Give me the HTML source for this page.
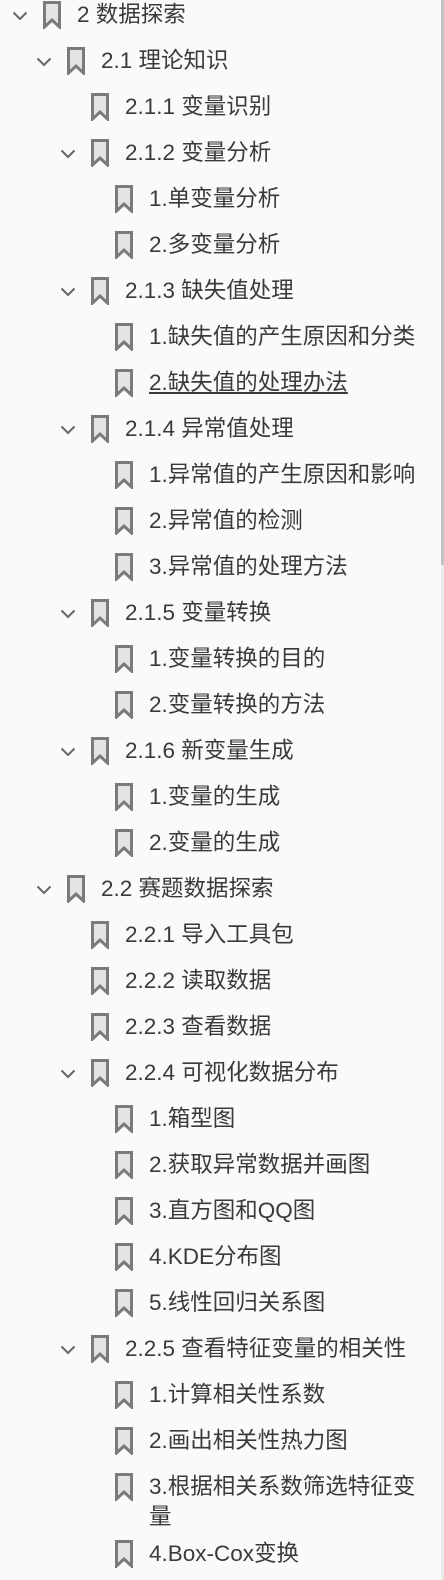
<!DOCTYPE html>
<html><head><meta charset="utf-8"><style>
body{margin:0;width:444px;height:1580px;background:#fafafa;overflow:hidden;position:relative;font-family:"Liberation Sans","Noto Sans CJK SC",sans-serif;}
.r{position:absolute;left:0;height:28px;width:440px}
.c{position:absolute;top:10px;width:16px;height:10px}
.b{position:absolute;top:0;width:18px;height:28px}
.t{position:absolute;top:-1px;font-size:22.5px;line-height:30px;color:#3a3a3a;white-space:nowrap}
.sb{position:absolute;right:0;top:0;width:3px;height:565px;background:#c2c2c2}
.st{position:absolute;right:0;top:565px;width:3px;height:1015px;background:#ececec}
</style></head><body>
<svg width="0" height="0" style="position:absolute"><defs>
<symbol id="bk" viewBox="0 0 18 28"><path d="M1.5 1.5H16.5V26L9 19L1.5 26Z" fill="#e4e4e4" stroke="#7a7a7a" stroke-width="3" stroke-linejoin="miter"/></symbol>
<symbol id="ch" viewBox="0 0 16 10"><path d="M1.5 1.5L8 8L14.5 1.5" fill="none" stroke="#666" stroke-width="2"/></symbol>
</defs></svg>
<div class="sb"></div><div class="st"></div>

<div class="r" style="top:1px"><svg class="c" style="left:12px"><use href="#ch"/></svg><svg class="b" style="left:43px"><use href="#bk"/></svg><span class="t" style="left:77px">2 数据探索</span></div>
<div class="r" style="top:47px"><svg class="c" style="left:36px"><use href="#ch"/></svg><svg class="b" style="left:67px"><use href="#bk"/></svg><span class="t" style="left:101px">2.1 理论知识</span></div>
<div class="r" style="top:93px"><svg class="b" style="left:91px"><use href="#bk"/></svg><span class="t" style="left:125px">2.1.1 变量识别</span></div>
<div class="r" style="top:139px"><svg class="c" style="left:60px"><use href="#ch"/></svg><svg class="b" style="left:91px"><use href="#bk"/></svg><span class="t" style="left:125px">2.1.2 变量分析</span></div>
<div class="r" style="top:185px"><svg class="b" style="left:115px"><use href="#bk"/></svg><span class="t" style="left:149px">1.单变量分析</span></div>
<div class="r" style="top:231px"><svg class="b" style="left:115px"><use href="#bk"/></svg><span class="t" style="left:149px">2.多变量分析</span></div>
<div class="r" style="top:277px"><svg class="c" style="left:60px"><use href="#ch"/></svg><svg class="b" style="left:91px"><use href="#bk"/></svg><span class="t" style="left:125px">2.1.3 缺失值处理</span></div>
<div class="r" style="top:323px"><svg class="b" style="left:115px"><use href="#bk"/></svg><span class="t" style="left:149px">1.缺失值的产生原因和分类</span></div>
<div class="r" style="top:369px"><svg class="b" style="left:115px"><use href="#bk"/></svg><span class="t" style="left:149px;text-decoration:underline">2.缺失值的处理办法</span></div>
<div class="r" style="top:415px"><svg class="c" style="left:60px"><use href="#ch"/></svg><svg class="b" style="left:91px"><use href="#bk"/></svg><span class="t" style="left:125px">2.1.4 异常值处理</span></div>
<div class="r" style="top:461px"><svg class="b" style="left:115px"><use href="#bk"/></svg><span class="t" style="left:149px">1.异常值的产生原因和影响</span></div>
<div class="r" style="top:507px"><svg class="b" style="left:115px"><use href="#bk"/></svg><span class="t" style="left:149px">2.异常值的检测</span></div>
<div class="r" style="top:553px"><svg class="b" style="left:115px"><use href="#bk"/></svg><span class="t" style="left:149px">3.异常值的处理方法</span></div>
<div class="r" style="top:599px"><svg class="c" style="left:60px"><use href="#ch"/></svg><svg class="b" style="left:91px"><use href="#bk"/></svg><span class="t" style="left:125px">2.1.5 变量转换</span></div>
<div class="r" style="top:645px"><svg class="b" style="left:115px"><use href="#bk"/></svg><span class="t" style="left:149px">1.变量转换的目的</span></div>
<div class="r" style="top:691px"><svg class="b" style="left:115px"><use href="#bk"/></svg><span class="t" style="left:149px">2.变量转换的方法</span></div>
<div class="r" style="top:737px"><svg class="c" style="left:60px"><use href="#ch"/></svg><svg class="b" style="left:91px"><use href="#bk"/></svg><span class="t" style="left:125px">2.1.6 新变量生成</span></div>
<div class="r" style="top:783px"><svg class="b" style="left:115px"><use href="#bk"/></svg><span class="t" style="left:149px">1.变量的生成</span></div>
<div class="r" style="top:829px"><svg class="b" style="left:115px"><use href="#bk"/></svg><span class="t" style="left:149px">2.变量的生成</span></div>
<div class="r" style="top:875px"><svg class="c" style="left:36px"><use href="#ch"/></svg><svg class="b" style="left:67px"><use href="#bk"/></svg><span class="t" style="left:101px">2.2 赛题数据探索</span></div>
<div class="r" style="top:921px"><svg class="b" style="left:91px"><use href="#bk"/></svg><span class="t" style="left:125px">2.2.1 导入工具包</span></div>
<div class="r" style="top:967px"><svg class="b" style="left:91px"><use href="#bk"/></svg><span class="t" style="left:125px">2.2.2 读取数据</span></div>
<div class="r" style="top:1013px"><svg class="b" style="left:91px"><use href="#bk"/></svg><span class="t" style="left:125px">2.2.3 查看数据</span></div>
<div class="r" style="top:1059px"><svg class="c" style="left:60px"><use href="#ch"/></svg><svg class="b" style="left:91px"><use href="#bk"/></svg><span class="t" style="left:125px">2.2.4 可视化数据分布</span></div>
<div class="r" style="top:1105px"><svg class="b" style="left:115px"><use href="#bk"/></svg><span class="t" style="left:149px">1.箱型图</span></div>
<div class="r" style="top:1151px"><svg class="b" style="left:115px"><use href="#bk"/></svg><span class="t" style="left:149px">2.获取异常数据并画图</span></div>
<div class="r" style="top:1197px"><svg class="b" style="left:115px"><use href="#bk"/></svg><span class="t" style="left:149px">3.直方图和QQ图</span></div>
<div class="r" style="top:1243px"><svg class="b" style="left:115px"><use href="#bk"/></svg><span class="t" style="left:149px">4.KDE分布图</span></div>
<div class="r" style="top:1289px"><svg class="b" style="left:115px"><use href="#bk"/></svg><span class="t" style="left:149px">5.线性回归关系图</span></div>
<div class="r" style="top:1335px"><svg class="c" style="left:60px"><use href="#ch"/></svg><svg class="b" style="left:91px"><use href="#bk"/></svg><span class="t" style="left:125px">2.2.5 查看特征变量的相关性</span></div>
<div class="r" style="top:1381px"><svg class="b" style="left:115px"><use href="#bk"/></svg><span class="t" style="left:149px">1.计算相关性系数</span></div>
<div class="r" style="top:1427px"><svg class="b" style="left:115px"><use href="#bk"/></svg><span class="t" style="left:149px">2.画出相关性热力图</span></div>
<div class="r" style="top:1473px"><svg class="b" style="left:115px"><use href="#bk"/></svg><span class="t" style="left:149px">3.根据相关系数筛选特征变<br>量</span></div>
<div class="r" style="top:1540px"><svg class="b" style="left:115px"><use href="#bk"/></svg><span class="t" style="left:149px">4.Box-Cox变换</span></div>
</body></html>
